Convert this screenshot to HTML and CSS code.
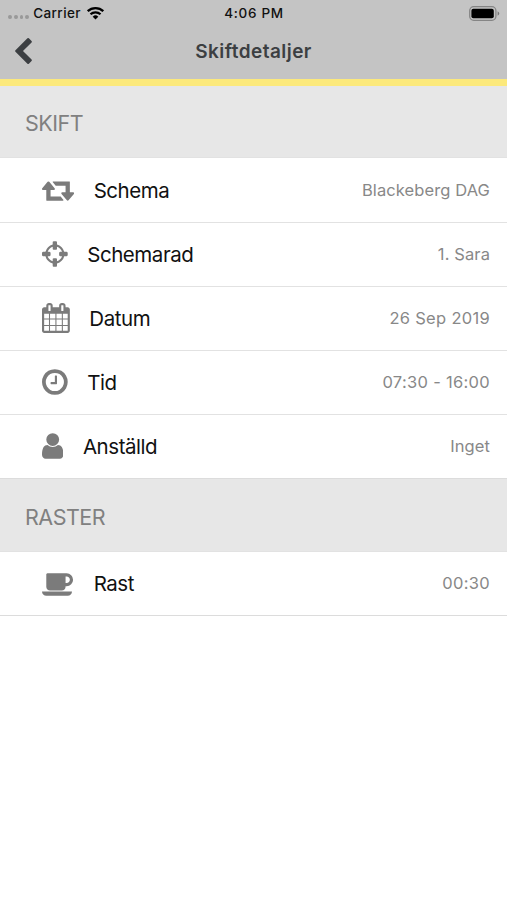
FILE: index.html
```
<!DOCTYPE html>
<html lang="sv">
<head>
    <meta charset="UTF-8">
    <meta name="viewport" content="width=device-width, initial-scale=1">
    <title>Skiftdetaljer</title>
    <link rel="stylesheet" href="styles.css">
</head>
<body>
    <header class="top">
        <!-- Status bar -->
        <div class="status-bar">
            <div class="status-left">
                <span class="signal"><i></i><i></i><i></i><i></i></span>
                <span class="carrier">Carrier</span>
                <svg class="wifi" viewBox="0 0 18 14">
                    <path d="M1.2 5.2a11.2 11.2 0 0 1 15.6 0" fill="none" stroke="#000" stroke-width="2.3"/>
                    <path d="M4 8.3a7.2 7.2 0 0 1 10 0" fill="none" stroke="#000" stroke-width="2.2"/>
                    <path d="M6.2 10.7a4 4 0 0 1 5.6 0L9 13.5z"/>
                </svg>
            </div>
            <div class="clock">4:06 PM</div>
            <div class="status-right">
                <svg class="battery" viewBox="0 0 31 15">
                    <rect x=".7" y=".7" width="26.2" height="13.6" rx="4" fill="none" stroke="#858585" stroke-width="1.3"/>
                    <rect x="2.4" y="2.7" width="22.4" height="9.6" rx="2"/>
                    <path d="M28.6 5.3q1.6.7 1.6 2.2t-1.6 2.2z" fill="#777"/>
                </svg>
            </div>
        </div>
        <!-- Navigation -->
        <nav class="nav-bar">
            <a class="back" href="#" aria-label="Tillbaka">
                <svg viewBox="410 26 1036 1612"><path d="M1427 301l-531 531 531 531q19 19 19 45t-19 45l-166 166q-19 19-45 19t-45-19l-742-742q-19-19-19-45t19-45l742-742q19-19 45-19t45 19l166 166q19 19 19 45t-19 45z"/></svg>
            </a>
            <h1>Skiftdetaljer</h1>
        </nav>
    </header>

    <main>
        <h2 class="section-title">SKIFT</h2>
        <ul class="list">
            <li class="row">
                <svg class="icon" viewBox="0 0 1920 1792"><path d="M1280 1504q0 13-9.5 22.5t-22.5 9.5h-960q-8 0-13.5-2t-9-7-5.5-8-3-11.5-1-11.5v-600h-192q-26 0-45-19t-19-45q0-24 15-41l320-384q19-22 49-22t49 22l320 384q15 17 15 41 0 26-19 45t-45 19h-192v384h576q16 0 25 11l160 192q7 10 7 21zm640-416q0 24-15 41l-320 384q-20 23-49 23t-49-23l-320-384q-15-17-15-41 0-26 19-45t45-19h192v-384h-576q-16 0-25-12l-160-192q-7-9-7-20 0-13 9.5-22.5t22.5-9.5h960q8 0 13.5 2t9 7 5.5 8 3 11.5 1 11.5v600h192q26 0 45 19t19 45z"/></svg>
                <span class="label">Schema</span>
                <span class="value">Blackeberg DAG</span>
            </li>
            <li class="row">
                <svg class="icon" viewBox="128 0 1536 1792"><path d="M1325 1024h-109q-26 0-45-19t-19-45v-128q0-26 19-45t45-19h109q-32-108-112.5-188.5t-188.5-112.5v109q0 26-19 45t-45 19h-128q-26 0-45-19t-19-45v-109q-108 32-188.5 112.5t-112.5 188.5h109q26 0 45 19t19 45v128q0 26-19 45t-45 19h-109q32 108 112.5 188.5t188.5 112.5v-109q0-26 19-45t45-19h128q26 0 45 19t19 45v109q108-32 188.5-112.5t112.5-188.5zm339-192v128q0 26-19 45t-45 19h-143q-37 161-154.5 278.5t-278.5 154.5v143q0 26-19 45t-45 19h-128q-26 0-45-19t-19-45v-143q-161-37-278.5-154.5t-154.5-278.5h-143q-26 0-45-19t-19-45v-128q0-26 19-45t45-19h143q37-161 154.5-278.5t278.5-154.5v-143q0-26 19-45t45-19h128q26 0 45 19t19 45v143q161 37 278.5 154.5t154.5 278.5h143q26 0 45 19t19 45z"/></svg>
                <span class="label">Schemarad</span>
                <span class="value">1. Sara</span>
            </li>
            <li class="row">
                <svg class="icon" viewBox="64 0 1664 1792"><path d="M192 1664h288v-288h-288v288zm352 0h320v-288h-320v288zm-352-352h288v-320h-288v320zm352 0h320v-320h-320v320zm-352-384h288v-288h-288v288zm736 736h320v-288h-320v288zm-384-736h320v-288h-320v288zm768 736h288v-288h-288v288zm-384-352h320v-320h-320v320zm-352-864v-288q0-13-9.5-22.5t-22.5-9.5h-64q-13 0-22.5 9.5t-9.5 22.5v288q0 13 9.5 22.5t22.5 9.5h64q13 0 22.5-9.5t9.5-22.5zm736 864h288v-320h-288v320zm-384-384h320v-288h-320v288zm384 0h288v-288h-288v288zm32-480v-288q0-13-9.5-22.5t-22.5-9.5h-64q-13 0-22.5 9.5t-9.5 22.5v288q0 13 9.5 22.5t22.5 9.5h64q13 0 22.5-9.5t9.5-22.5zm384-64v1280q0 52-38 90t-90 38h-1408q-52 0-90-38t-38-90v-1280q0-52 38-90t90-38h128v-96q0-66 47-113t113-47h64q66 0 113 47t47 113v96h384v-96q0-66 47-113t113-47h64q66 0 113 47t47 113v96h128q52 0 90 38t38 90z"/></svg>
                <span class="label">Datum</span>
                <span class="value digits">26 Sep 2019</span>
            </li>
            <li class="row">
                <svg class="icon" viewBox="128 0 1536 1792"><path d="M1024 544v448q0 14-9 23t-23 9h-320q-14 0-23-9t-9-23v-64q0-14 9-23t23-9h224v-352q0-14 9-23t23-9h64q14 0 23 9t9 23zm416 352q0-148-73-273t-198-198-273-73-273 73-198 198-73 273 73 273 198 198 273 73 273-73 198-198 73-273zm224 0q0 209-103 385.5t-279.5 279.5-385.5 103-385.5-103-279.5-279.5-103-385.5 103-385.5 279.5-279.5 385.5-103 385.5 103 279.5 279.5 103 385.5z"/></svg>
                <span class="label">Tid</span>
                <span class="value digits">07:30 - 16:00</span>
            </li>
            <li class="row">
                <svg class="icon" viewBox="256 0 1280 1792"><path d="M1536 1399q0 109-62.5 187t-150.5 78h-854q-88 0-150.5-78t-62.5-187q0-85 8.5-160.5t31.5-152 58.5-131 94-89 134.5-34.5q131 128 313 128t313-128q76 0 134.5 34.5t94 89 58.5 131 31.5 152 8.5 160.5zm-256-887q0 159-112.5 271.5t-271.5 112.5-271.5-112.5-112.5-271.5 112.5-271.5 271.5-112.5 271.5 112.5 112.5 271.5z"/></svg>
                <span class="label">Anställd</span>
                <span class="value">Inget</span>
            </li>
        </ul>

        <h2 class="section-title">RASTER</h2>
        <ul class="list">
            <li class="row">
                <svg class="icon" viewBox="0 0 1920 1792"><path d="M1664 704q0-80-56-136t-136-56h-64v384h64q80 0 136-56t56-136zm-1664 704h1792q0 106-75 181t-181 75h-1280q-106 0-181-75t-75-181zm1856-704q0 159-112.5 271.5t-271.5 112.5h-64v32q0 92-66 158t-158 66h-704q-92 0-158-66t-66-158v-736q0-26 19-45t45-19h1152q159 0 271.5 112.5t112.5 271.5z"/></svg>
                <span class="label">Rast</span>
                <span class="value digits">00:30</span>
            </li>
        </ul>
    </main>
</body>
</html>
```
FILE: styles.css
```
* {
    box-sizing: border-box;
}
body {
    margin: 0;
    min-height: 100vh;
    background-color: #fff;
    color: #111;
    font-family: Inter, "Liberation Sans", sans-serif;
}
.top {
    height: 86px;
    background-color: #c4c4c4;
    border-bottom: 7.5px solid #fce97c;
}
.status-bar {
    display: grid;
    grid-template-columns: 1fr auto 1fr;
    align-items: center;
    height: 26px;
    padding: 0 7px 0 8px;
    color: #111;
    font-size: 13.5px;
    font-weight: 500;
}
.status-left {
    display: flex;
    align-items: center;
}
.signal {
    display: flex;
    gap: 2px;
    margin: 8px 4px 0 0;
}
.signal i {
    width: 3.8px;
    height: 3.8px;
    border-radius: 50%;
    background-color: #999;
}
.carrier {
    letter-spacing: 0.4px;
}
.clock {
    letter-spacing: 0.7px;
}
.wifi {
    width: 19px;
    height: 14px;
    margin-left: 5px;
}
.status-right {
    display: flex;
    justify-content: flex-end;
}
.battery {
    width: 31px;
    height: 15px;
}
.nav-bar {
    display: grid;
    grid-template-columns: 1fr auto 1fr;
    align-items: center;
    height: 51px;
    padding: 0 15px;
}
.back svg {
    display: block;
    width: 17px;
    height: 26px;
    margin-bottom: 2px;
    fill: #3c3f42;
}
h1 {
    margin: 0;
    color: #3c3f42;
    font-size: 19px;
    font-weight: 600;
    letter-spacing: 0.45px;
}
.section-title {
    display: flex;
    align-items: center;
    height: 71px;
    margin: 0;
    padding: 3px 25px 0;
    background-color: #e7e7e7;
    color: #808080;
    font-size: 21.5px;
    font-weight: 400;
    letter-spacing: -0.5px;
}
.list {
    margin: 0;
    padding: 0;
    list-style: none;
}
.list + .section-title {
    height: 72px;
}
.row {
    display: flex;
    align-items: center;
    height: 64px;
    padding: 0 17px 1px 42px;
    border-top: 1px solid #e2e2e2;
}
.row:first-child {
    height: 65px;
}
.row:last-child {
    border-bottom: 1px solid #dcdcdc;
    height: 65px;
}
.icon {
    flex: none;
    height: 30px;
    margin-right: 20px;
    fill: #7b7b7b;
}
.label {
    margin: 1px 0 0 -0.5px;
    font-size: 20.5px;
    letter-spacing: -0.45px;
}
.value {
    margin-left: auto;
    color: #888;
    font-size: 16.5px;
    letter-spacing: 0.1px;
}
.digits {
    letter-spacing: 0.3px;
}
```
